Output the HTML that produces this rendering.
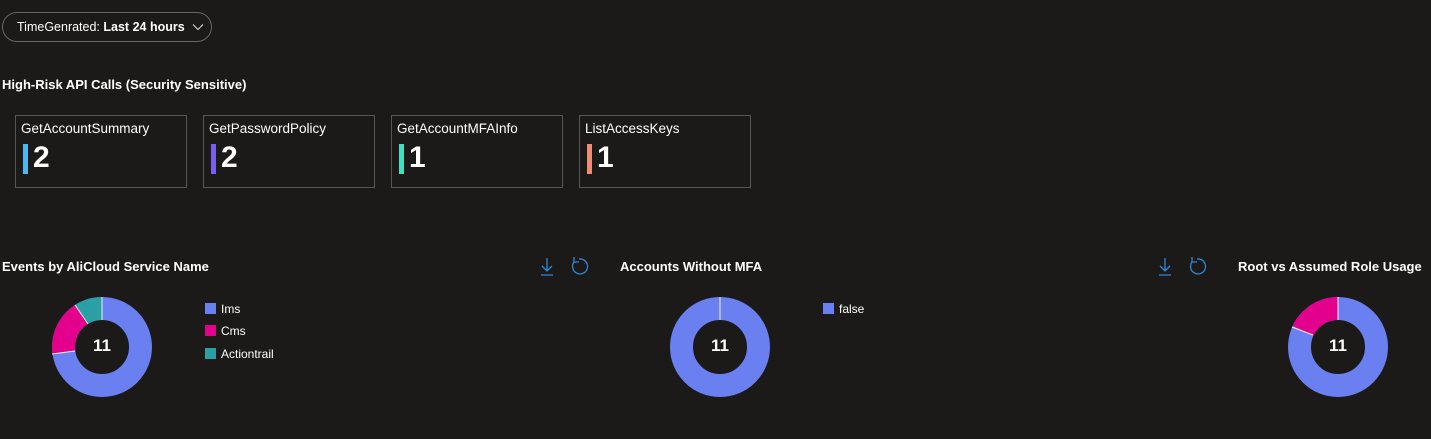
<!DOCTYPE html>
<html><head><meta charset="utf-8"><style>
*{margin:0;padding:0;box-sizing:border-box}
body{width:1431px;height:439px;background:#1b1a19;color:#fff;font-family:"Segoe UI","Liberation Sans",sans-serif;position:relative;overflow:hidden}
.a{position:absolute}
.pill{left:2px;top:12px;width:210px;height:30px;border:1px solid #666;border-radius:15px;font-size:12.5px;line-height:28px;padding-left:14px;white-space:nowrap}
.h{font-weight:bold;font-size:13px;white-space:nowrap}
.card{top:115px;width:172px;height:73px;border:1px solid #555}
.card .t{position:absolute;left:5px;top:5px;font-size:13.5px}
.card .bar{position:absolute;left:7px;top:28px;width:5px;height:30px}
.card .n{position:absolute;left:17px;top:22px;font-size:30px;line-height:40px;font-weight:600}
.lg{font-size:12px;white-space:nowrap}
.lg i{display:inline-block;width:11px;height:11px;vertical-align:-1px;margin-right:5px}
.num{font-size:17px;font-weight:bold;width:60px;text-align:center}
</style></head><body>
<div class="a pill">TimeGenrated: <b>Last 24 hours</b> <svg width="12" height="8" style="margin-left:4px" viewBox="0 0 12 8"><path d="M1 1.5l5 5 5-5" stroke="#ddd" fill="none" stroke-width="1"/></svg></div>
<div class="a h" style="left:2px;top:77px">High-Risk API Calls (Security Sensitive)</div>
<div class="a card" style="left:15px"><span class="t">GetAccountSummary</span><span class="bar" style="background:#4cb8f0"></span><span class="n">2</span></div>
<div class="a card" style="left:203px"><span class="t">GetPasswordPolicy</span><span class="bar" style="background:#7a5cf5"></span><span class="n">2</span></div>
<div class="a card" style="left:391px"><span class="t">GetAccountMFAInfo</span><span class="bar" style="background:#3fe0c0"></span><span class="n">1</span></div>
<div class="a card" style="left:579px"><span class="t">ListAccessKeys</span><span class="bar" style="background:#f08c70"></span><span class="n">1</span></div>

<div class="a h" style="left:2px;top:259px">Events by AliCloud Service Name</div>
<div class="a h" style="left:620px;top:259px">Accounts Without MFA</div>
<div class="a h" style="left:1238px;top:259px">Root vs Assumed Role Usage</div>

<svg class="a" style="left:0;top:0" width="1431" height="439">
<g stroke="#2b88d8" fill="none" stroke-width="1.3">
<path d="M547 258v13M542 266l5 5 5-5M541 275h12"/>
<path d="M574 262a7.5 7.5 0 1 0 5-3M574 257v5h5" />
<path d="M1165 258v13M1160 266l5 5 5-5M1159 275h12"/>
<path d="M1192 262a7.5 7.5 0 1 0 5-3M1192 257v5h5"/>
</g>
<g transform="translate(102 347) rotate(-90)" fill="none" stroke-width="23">
<circle r="38.5" stroke="#6a7ff0"/>
<circle r="38.5" stroke="#e3008c" stroke-dasharray="43.98 300" stroke-dashoffset="-175.9"/>
<circle r="38.5" stroke="#2aa0a4" stroke-dasharray="21.99 300" stroke-dashoffset="-219.9"/>
</g>
<g stroke="#eee" stroke-width="1"><line x1="102" y1="297" x2="102" y2="320"/><line x1="52" y1="354" x2="75" y2="351"/><line x1="75" y1="305" x2="88" y2="324"/></g>
<circle cx="720" cy="347" r="38.5" fill="none" stroke="#6a7ff0" stroke-width="23"/>
<line x1="720" y1="297" x2="720" y2="320" stroke="#eee"/>
<g transform="translate(1338 347) rotate(-90)" fill="none" stroke-width="23">
<circle r="38.5" stroke="#6a7ff0"/>
<circle r="38.5" stroke="#e3008c" stroke-dasharray="43.98 300" stroke-dashoffset="-197.9"/>
</g>
<g stroke="#eee"><line x1="1338" y1="297" x2="1338" y2="320"/><line x1="1292" y1="327" x2="1313" y2="335"/></g>
</svg>
<div class="a num" style="left:72px;top:336px">11</div>
<div class="a num" style="left:690px;top:336px">11</div>
<div class="a num" style="left:1308px;top:336px">11</div>
<div class="a lg" style="left:205px;top:302px"><i style="background:#6a7ff0"></i>Ims</div>
<div class="a lg" style="left:205px;top:324px"><i style="background:#e3008c"></i>Cms</div>
<div class="a lg" style="left:205px;top:347px"><i style="background:#2aa0a4"></i>Actiontrail</div>
<div class="a lg" style="left:823px;top:302px"><i style="background:#6a7ff0"></i>false</div>
</body></html>
